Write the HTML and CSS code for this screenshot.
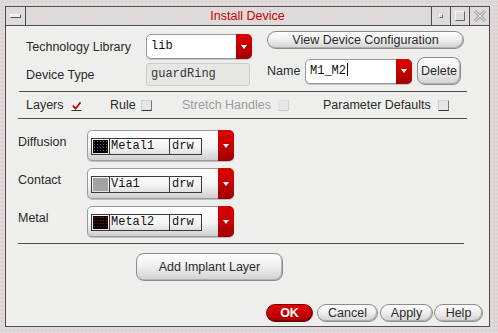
FILE: index.html
```html
<!DOCTYPE html>
<html lang="en">
<head>
    <meta charset="UTF-8">
    <title>Install Device</title>
    <link rel="stylesheet" href="styles.css">
</head>
<body>
    <div class="frame">
        <div class="window">
            <div class="titlebar">
                <div class="tb-menu"><span class="menu-icon"></span></div>
                <div class="tb-title">Install Device</div>
                <div class="tb-buttons">
                    <div class="tb-btn"><span class="ico-min"></span></div>
                    <div class="tb-btn"><span class="ico-max"></span></div>
                    <div class="tb-btn tb-close">
                        <svg width="14" height="14" viewBox="0 0 14 14">
                            <path d="M2 2 L12 12 M12 2 L2 12" stroke="#8a8a8a" stroke-width="3" fill="none"/>
                            <path d="M2 2 L12 12 M12 2 L2 12" stroke="#e4e4e4" stroke-width="1.4" fill="none"/>
                        </svg>
                    </div>
                </div>
            </div>

            <div class="panel">
                <div class="top">
                    <div class="top-left">
                        <div class="field-row">
                            <span class="label">Technology Library</span>
                            <div class="combo combo-lib">
                                <span class="combo-text">lib</span>
                                <span class="combo-arrow"></span>
                            </div>
                        </div>
                        <div class="field-row row-type">
                            <span class="label">Device Type</span>
                            <div class="readonly">guardRing</div>
                        </div>
                    </div>
                    <div class="top-right">
                        <button class="btn btn-config">View Device Configuration</button>
                        <div class="name-row">
                            <span class="label name-label">Name</span>
                            <div class="combo combo-name">
                                <span class="combo-text">M1_M2<span class="caret"></span></span>
                                <span class="combo-arrow"></span>
                            </div>
                            <button class="btn btn-delete">Delete</button>
                        </div>
                    </div>
                </div>

                <div class="sep sep-top"></div>

                <div class="checks">
                    <div class="check-group g-layers">
                        <span class="check-label">Layers</span>
                        <span class="box checked">
                            <svg width="10" height="10" viewBox="0 0 10 10">
                                <path d="M1 4.5 L4 8 L9.5 1" stroke="#d00000" stroke-width="2" fill="none"/>
                            </svg>
                        </span>
                    </div>
                    <div class="check-group g-rule">
                        <span class="check-label">Rule</span>
                        <span class="box"></span>
                    </div>
                    <div class="check-group g-stretch disabled">
                        <span class="check-label">Stretch Handles</span>
                        <span class="box"></span>
                    </div>
                    <div class="check-group g-param">
                        <span class="check-label">Parameter Defaults</span>
                        <span class="box"></span>
                    </div>
                </div>

                <div class="sep sep-mid"></div>

                <div class="layers">
                    <div class="layer-row">
                        <span class="layer-label">Diffusion</span>
                        <div class="layer-combo">
                            <div class="cells">
                                <span class="cell swatch-cell"><span class="swatch sw-metal1"></span></span>
                                <span class="cell name-cell">Metal1</span>
                                <span class="cell purpose-cell">drw</span>
                            </div>
                            <span class="combo-arrow"></span>
                        </div>
                    </div>
                    <div class="layer-row">
                        <span class="layer-label">Contact</span>
                        <div class="layer-combo">
                            <div class="cells">
                                <span class="cell swatch-cell"><span class="swatch sw-via1"></span></span>
                                <span class="cell name-cell">Via1</span>
                                <span class="cell purpose-cell">drw</span>
                            </div>
                            <span class="combo-arrow"></span>
                        </div>
                    </div>
                    <div class="layer-row">
                        <span class="layer-label">Metal</span>
                        <div class="layer-combo">
                            <div class="cells">
                                <span class="cell swatch-cell"><span class="swatch sw-metal2"></span></span>
                                <span class="cell name-cell">Metal2</span>
                                <span class="cell purpose-cell">drw</span>
                            </div>
                            <span class="combo-arrow"></span>
                        </div>
                    </div>
                </div>

                <div class="sep sep-bottom"></div>

                <div class="implant">
                    <button class="btn btn-implant">Add Implant Layer</button>
                </div>

                <div class="actions">
                    <button class="btn btn-ok">OK</button>
                    <button class="btn btn-cancel">Cancel</button>
                    <button class="btn btn-apply">Apply</button>
                    <button class="btn btn-help">Help</button>
                </div>
            </div>
        </div>
    </div>
</body>
</html>
```

FILE: styles.css
```css
* {
    box-sizing: border-box;
}

body {
    margin: 0;
    width: 498px;
    height: 333px;
    overflow: hidden;
    font-family: 'Liberation Sans', Arial, sans-serif;
    font-size: 12.5px;
    color: #2a2a2a;
}

.frame {
    height: 333px;
    padding: 6px 8px 6px 5px;
    background: radial-gradient(circle, #e6c6c6 0.6px, transparent 1px) 0 0 / 4px 4px, #dcdada;
}

.window {
    height: 321px;
    border: 1px solid #4e4e4e;
    display: flex;
    flex-direction: column;
    background-color: #eeefec;
}

/* title bar */
.titlebar {
    height: 19px;
    flex: none;
    border-bottom: 1px solid #4e4e4e;
    display: grid;
    grid-template-columns: 20px 1fr auto;
    background: radial-gradient(circle, #ebcfcf 0.6px, transparent 1px) 1px 1px / 3px 3px, #dddbdb;
}

.tb-menu {
    grid-column: 1;
    grid-row: 1;
    border-right: 1px solid #4e4e4e;
    display: flex;
    align-items: center;
    justify-content: center;
}

.menu-icon {
    width: 11px;
    height: 4px;
    background-color: #ececec;
    border: 1px solid;
    border-color: #f8f8f8 #555 #555 #f8f8f8;
}

.tb-title {
    grid-column: 1 / -1;
    grid-row: 1;
    text-align: center;
    line-height: 18px;
    color: #cc0000;
    font-size: 12.5px;
}

.tb-buttons {
    grid-column: 3;
    grid-row: 1;
    display: flex;
}

.tb-btn {
    width: 19px;
    border-left: 1px solid #4e4e4e;
    display: flex;
    align-items: center;
    justify-content: center;
}

.tb-close {
    width: 20px;
}

.ico-min {
    width: 4px;
    height: 4px;
    border: 1px solid;
    border-color: #f4f4f4 #666 #666 #f4f4f4;
}

.ico-max {
    width: 10px;
    height: 10px;
    border: 1px solid;
    border-color: #f4f4f4 #666 #666 #f4f4f4;
}

/* panel */
.panel {
    flex: 1;
    display: flex;
    flex-direction: column;
}

.top {
    display: flex;
    height: 65px;
    padding-left: 20px;
}

.top-left {
    padding-top: 8px;
}

.field-row {
    display: flex;
    align-items: center;
    height: 25px;
}

.row-type {
    margin-top: 4px;
    height: 23px;
}

.label {
    width: 120px;
}

.combo {
    display: flex;
    height: 25px;
    background-color: #fff;
    border: 1px solid #9a9a9a;
    border-radius: 5px;
    box-shadow: 0 1px 0 #c4c4c4;
}

.combo-lib {
    width: 106px;
}

.combo-name {
    width: 107px;
}

.combo-text {
    flex: 1;
    padding-left: 4px;
    line-height: 23px;
    font-family: 'Liberation Mono', 'Courier New', monospace;
    font-size: 12px;
    color: #111;
}

.caret {
    display: inline-block;
    width: 1px;
    height: 13px;
    margin-left: 1px;
    vertical-align: -2px;
    background-color: #111;
}

.combo-arrow {
    width: 16px;
    flex: none;
    display: flex;
    align-items: center;
    justify-content: center;
    margin: -1px -1px -1px 0;
    border-radius: 0 5px 5px 0;
    background: linear-gradient(#dc0000, #c00000 60%, #9c0000);
}

.combo-arrow::after {
    content: "";
    border-left: 3px solid transparent;
    border-right: 3px solid transparent;
    border-top: 4px solid #fff;
}

.readonly {
    width: 104px;
    height: 23px;
    padding-left: 4px;
    line-height: 21px;
    background-color: #e6e7e4;
    border: 1px solid #cbcbcb;
    border-radius: 3px;
    font-family: 'Liberation Mono', 'Courier New', monospace;
    font-size: 12px;
    color: #333;
}

.top-right {
    margin-left: 15px;
    padding-top: 5px;
}

.btn {
    font-family: inherit;
    font-size: 12.5px;
    color: #2a2a2a;
    padding: 0;
    border: 1px solid #8c8c8c;
    border-radius: 9px;
    background: linear-gradient(#fefefe, #f0f0f0 45%, #d2d2d2);
    box-shadow: inset -1px -1px 0 #b0b0b0;
}

.btn-config {
    display: block;
    width: 197px;
    height: 18px;
    line-height: 15px;
}

.name-row {
    display: flex;
    align-items: center;
    height: 28px;
    margin-top: 8px;
}

.name-label {
    width: 38px;
}

.btn-delete {
    width: 44px;
    height: 28px;
    margin-left: 5px;
    border-radius: 8px;
}

.sep {
    height: 1px;
    flex: none;
    background-color: #4e4e4e;
}

.sep-top {
    margin-left: 13px;
    width: 448px;
}

.sep-mid {
    margin-left: 12px;
    width: 449px;
}

.sep-bottom {
    margin-top: 6px;
    margin-left: 12px;
    width: 446px;
}

/* checkbox row */
.checks {
    display: flex;
    align-items: center;
    height: 26px;
    padding-left: 20px;
}

.check-group {
    display: flex;
    align-items: center;
}

.g-layers .check-label {
    width: 45px;
}

.g-rule {
    margin-left: 28px;
}

.g-rule .check-label {
    width: 31px;
}

.g-stretch {
    margin-left: 30px;
}

.g-stretch .check-label {
    width: 96px;
}

.g-param {
    margin-left: 34px;
}

.g-param .check-label {
    width: 115px;
}

.box {
    width: 11px;
    height: 11px;
    display: flex;
    background-color: #e6e6e6;
    border: 1px solid;
    border-color: #d0d0d0 #777 #333 #d0d0d0;
}

.box.checked {
    background-color: #f6f6f6;
    border-color: #f0f0f0 #f0f0f0 #333 #f0f0f0;
}

.disabled .check-label {
    color: #9c9c9c;
}

.disabled .box {
    background: radial-gradient(circle, #d6d6d6 0.5px, transparent 0.8px) 0 0 / 2px 2px, #eeeeee;
    border-color: #e0e0e0 #cfcfcf #c8c8c8 #e0e0e0;
}

/* layer rows */
.layers {
    display: flex;
    flex-direction: column;
    gap: 7px;
    margin-top: 11px;
    padding-left: 12px;
}

.layer-row {
    display: flex;
    align-items: flex-start;
}

.layer-label {
    width: 69px;
    padding-top: 4px;
    line-height: 16px;
}

.layer-combo {
    display: flex;
    width: 147px;
    height: 31px;
    border: 1px solid #9a9a9a;
    border-radius: 5px;
    background: linear-gradient(#ffffff, #f4f4f4 55%, #cfcfcf);
    box-shadow: 0 1px 0 #bdbdbd;
}

.cells {
    flex: 1;
    display: flex;
    align-self: flex-start;
    margin: 7px 0 0 3px;
    height: 17px;
}

.cell {
    border: 1px solid #3a3a3a;
    height: 17px;
    font-family: 'Liberation Mono', 'Courier New', monospace;
    font-size: 12px;
    line-height: 15px;
    color: #111;
}

.swatch-cell {
    width: 19px;
    padding: 1px;
}

.name-cell {
    width: 60px;
    border-left: none;
    padding-left: 1px;
}

.purpose-cell {
    width: 32px;
    border-left: none;
    padding-left: 2px;
}

.swatch {
    display: block;
    height: 13px;
}

.sw-metal1 {
    background: radial-gradient(circle, #6a6a6a 0.5px, transparent 0.9px) 0 0 / 3px 3px, #000;
}

.sw-via1 {
    background-color: #a3a3a3;
}

.sw-metal2 {
    background: radial-gradient(circle, #d00000 0.6px, transparent 1px) 0 0 / 3px 3px, #000;
}

/* bottom buttons */
.implant {
    margin-top: 9px;
    padding-left: 130px;
}

.btn-implant {
    width: 147px;
    height: 28px;
    border-radius: 8px;
}

.actions {
    display: flex;
    justify-content: flex-end;
    margin-top: 23px;
    padding-right: 6px;
}

.actions .btn {
    height: 18px;
    line-height: 15px;
}

.btn-ok {
    width: 47px;
    margin-right: 4px;
    color: #fff;
    font-weight: bold;
    border-color: #7a0000;
    background: linear-gradient(#e40000, #c80000 55%, #a00000);
    box-shadow: inset -1px -1px 0 #800000;
}

.btn-cancel {
    width: 61px;
    margin-right: 2px;
}

.btn-apply {
    width: 53px;
    margin-right: 1px;
}

.btn-help {
    width: 49px;
}
```
